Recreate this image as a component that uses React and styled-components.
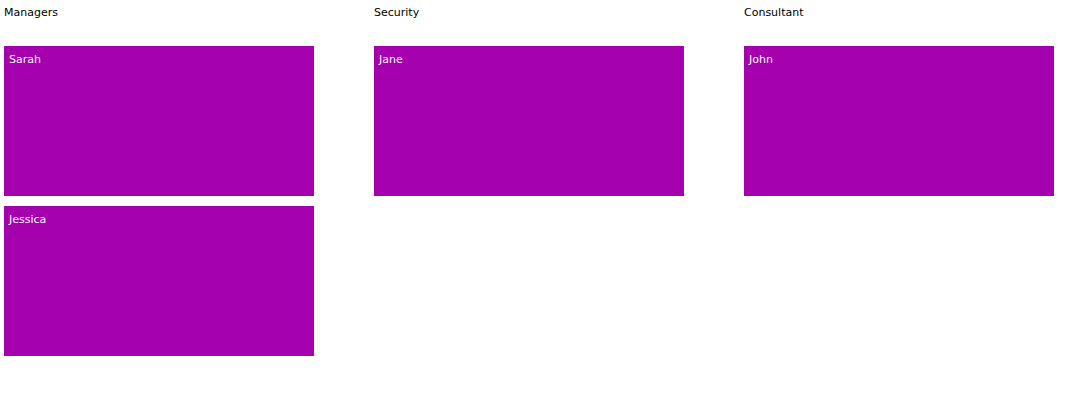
import React from 'react'
import styled, { createGlobalStyle } from 'styled-components'

const groups = [
    { title: 'Managers', people: ['Sarah', 'Jessica'] },
    { title: 'Security', people: ['Jane'] },
    { title: 'Consultant', people: ['John'] },
]

const App = () => {
    return (
        <>
            <GlobalStyle />
            <Board>
                {groups.map(group => (
                    <Column key={group.title}>
                        <Heading>{group.title}</Heading>
                        {group.people.map(name => (
                            <Tile key={name}>{name}</Tile>
                        ))}
                    </Column>
                ))}
            </Board>
        </>
    )
}

const GlobalStyle = createGlobalStyle`
body {
    margin: 0;
    background: #ffffff;
    font-family: "DejaVu Sans", Verdana, sans-serif;
}
`

const Board = styled.div`
display: flex;
gap: 60px;
padding: 4px;
`

const Column = styled.div`
display: flex;
flex-direction: column;
gap: 10px;
width: 310px;
`

const Heading = styled.div`
font-size: 11px;
line-height: 16px;
color: #000;
padding-top: 1px;
margin-bottom: 15px;
`

const Tile = styled.div`
box-sizing: border-box;
width: 310px;
height: 150px;
padding: 6px 5px 5px;
background: #a500ae;
color: #fff;
font-size: 11px;
line-height: 16px;
`

export default App
